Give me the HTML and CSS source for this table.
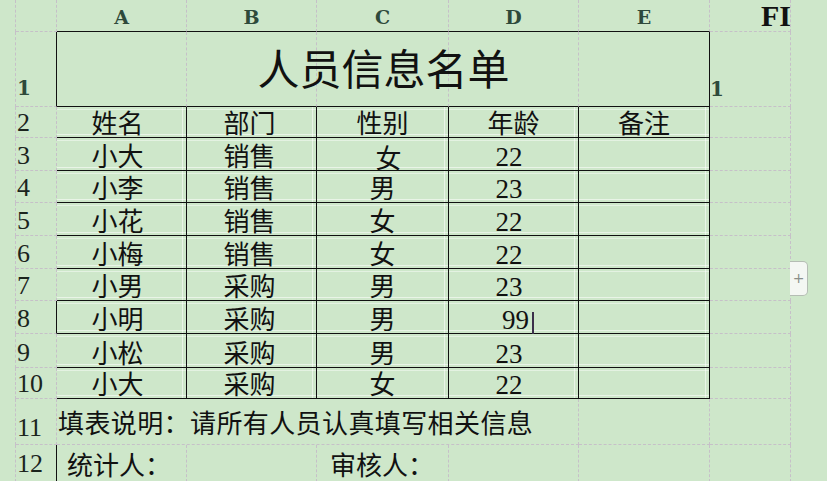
FILE: index.html
```html
<!DOCTYPE html>
<html lang="zh-CN">
<head>
<meta charset="utf-8">
<title>人员信息名单</title>
<link rel="stylesheet" href="styles.css">
</head>
<body>
<div class="wrap">
  <div class="sheet">
    <!-- column header row -->
    <div class="m"></div>
    <div class="c hd"></div>
    <div class="c hd sb">A</div>
    <div class="c hd sb">B</div>
    <div class="c hd sb">C</div>
    <div class="c hd sb">D</div>
    <div class="c hd sb">E</div>
    <div class="c hd fh"><span>FIL</span></div>
    <div class="x"></div>

    <!-- row 1 -->
    <div class="m"></div>
    <div class="c rh sr rn1">1</div>
    <div class="c sb r1 g3"></div>
    <div class="c sb r1 g4"></div>
    <div class="c sb r1 g5"></div>
    <div class="c sb r1 g6"></div>
    <div class="c sb sr r1 g7"></div>
    <div class="title">人员信息名单</div>
    <div class="c f1">1</div>
    <div class="x"></div>

    <!-- row 2 -->
    <div class="m"></div>
    <div class="c rh">2</div>
    <div class="c t ca">姓名</div>
    <div class="c t cb">部门</div>
    <div class="c t">性别</div>
    <div class="c t">年龄</div>
    <div class="c t">备注</div>
    <div class="c"></div>
    <div class="x"></div>

    <!-- row 3 -->
    <div class="m"></div>
    <div class="c rh">3</div>
    <div class="c t ca">小大</div>
    <div class="c t cb">销售</div>
    <div class="c t odd">女</div>
    <div class="c t num">22</div>
    <div class="c t"></div>
    <div class="c"></div>
    <div class="x"></div>

    <!-- row 4 -->
    <div class="m"></div>
    <div class="c rh">4</div>
    <div class="c t ca">小李</div>
    <div class="c t cb">销售</div>
    <div class="c t">男</div>
    <div class="c t num">23</div>
    <div class="c t"></div>
    <div class="c"></div>
    <div class="x"></div>

    <!-- row 5 -->
    <div class="m"></div>
    <div class="c rh">5</div>
    <div class="c t ca">小花</div>
    <div class="c t cb">销售</div>
    <div class="c t">女</div>
    <div class="c t num">22</div>
    <div class="c t"></div>
    <div class="c"></div>
    <div class="x"></div>

    <!-- row 6 -->
    <div class="m"></div>
    <div class="c rh">6</div>
    <div class="c t ca">小梅</div>
    <div class="c t cb">销售</div>
    <div class="c t">女</div>
    <div class="c t num">22</div>
    <div class="c t"></div>
    <div class="c"></div>
    <div class="x"></div>

    <!-- row 7 -->
    <div class="m"></div>
    <div class="c rh">7</div>
    <div class="c t ca">小男</div>
    <div class="c t cb">采购</div>
    <div class="c t">男</div>
    <div class="c t num">23</div>
    <div class="c t"></div>
    <div class="c"></div>
    <div class="x"></div>

    <!-- row 8 -->
    <div class="m"></div>
    <div class="c rh sr">8</div>
    <div class="c t ca">小明</div>
    <div class="c t cb">采购</div>
    <div class="c t">男</div>
    <div class="c t num edit">99<span class="caret"></span></div>
    <div class="c t"></div>
    <div class="c"></div>
    <div class="x"></div>

    <!-- row 9 -->
    <div class="m"></div>
    <div class="c rh">9</div>
    <div class="c t ca">小松</div>
    <div class="c t cb">采购</div>
    <div class="c t">男</div>
    <div class="c t num">23</div>
    <div class="c t"></div>
    <div class="c"></div>
    <div class="x"></div>

    <!-- row 10 -->
    <div class="m"></div>
    <div class="c rh">10</div>
    <div class="c t ca">小大</div>
    <div class="c t cb">采购</div>
    <div class="c t">女</div>
    <div class="c t num">22</div>
    <div class="c t"></div>
    <div class="c"></div>
    <div class="x"></div>

    <!-- row 11 -->
    <div class="m"></div>
    <div class="c rh rn11">11</div>
    <div class="c note">填表说明：请所有人员认真填写相关信息</div>
    <div class="c"></div>
    <div class="c"></div>
    <div class="x"></div>

    <!-- row 12 -->
    <div class="m"></div>
    <div class="c rh sr rn12">12</div>
    <div class="c sig sig-a">统计人：</div>
    <div class="c"></div>
    <div class="c sig sig-c">审核人：</div>
    <div class="c"></div>
    <div class="c"></div>
    <div class="c"></div>
    <div class="x"></div>
  </div>
  <div class="tab">+</div>
</div>
</body>
</html>
```

FILE: styles.css
```css
html, body {
  margin: 0;
  padding: 0;
}

body {
  width: 827px;
  height: 481px;
  overflow: hidden;
  background: #cee7ca;
  color: #111;
  font-family: "Noto Sans CJK SC", sans-serif;
}

.wrap {
  position: relative;
  width: 827px;
  height: 481px;
  overflow: hidden;
}

.sheet {
  display: grid;
  grid-template-columns: 16px 41px 130px 130px 132px 130px 131px 81px 1fr;
  grid-template-rows: 32px 75px 31px 33px 32px 33px 33px 32px 33px 34px 31px 46px 37px;
}

/* left blank margin */
.m {
  border-right: 1px dashed #c6c0c8;
}

/* blank area right of column F */
.x {
  border: none;
}

/* generic cell */
.c {
  box-sizing: border-box;
  border-right: 1px dashed #c6c0c8;
  border-bottom: 1px dashed #c6c0c8;
  display: flex;
  align-items: flex-end;
  justify-content: center;
  white-space: nowrap;
  min-width: 0;
  min-height: 0;
  font-size: 26px;
  line-height: 26px;
  padding-bottom: 2px;
}

.sb {
  border-bottom: 1px solid #111;
}

.sr {
  border-right: 1px solid #111;
}

/* column letters */
.hd {
  align-items: center;
  padding-bottom: 0;
  padding-top: 2px;
  font-family: "DejaVu Serif", serif;
  font-weight: bold;
  font-size: 19px;
  line-height: 20px;
  color: #2e4a3b;
}

.fh {
  justify-content: flex-start;
  align-items: flex-end;
  overflow: hidden;
  padding-left: 51px;
  padding-top: 0;
  padding-bottom: 0;
  color: #111;
  font-family: "Liberation Serif", serif;
  font-size: 30px;
  line-height: 30px;
}

/* row numbers */
.rh {
  justify-content: flex-start;
  padding-left: 1px;
  padding-bottom: 1px;
  font-family: "Liberation Serif", serif;
  font-size: 26px;
  line-height: 26px;
  color: #1b241d;
}

.rn1,
.f1 {
  font-family: "DejaVu Serif", serif;
  font-weight: bold;
  font-size: 20px;
  line-height: 20px;
  color: #2e4a3b;
  padding-bottom: 8px;
}

.f1 {
  justify-content: flex-start;
  padding-left: 0;
  padding-bottom: 7px;
}

.rn11 {
  padding-bottom: 3px;
}

.rn12 {
  align-items: center;
  padding-bottom: 0;
  padding-top: 2px;
}

/* title row */
.r1 { grid-row: 2; }
.g3 { grid-column: 3; }
.g4 { grid-column: 4; }
.g5 { grid-column: 5; }
.g6 { grid-column: 6; }
.g7 { grid-column: 7; }

.title {
  grid-row: 2;
  grid-column: 3 / 8;
  z-index: 1;
  display: flex;
  align-items: center;
  justify-content: center;
  padding-bottom: 5px;
  font-size: 42px;
  line-height: 42px;
  color: #111;
}

/* bordered table cells */
.t {
  border-right: 1px solid #111;
  border-bottom: 1px solid #111;
  background-image:
    linear-gradient(to top, transparent 2px, rgba(255, 255, 255, 0.55) 2px, rgba(255, 255, 255, 0.55) 3px, transparent 3px),
    linear-gradient(to bottom, transparent 2px, rgba(255, 255, 255, 0.45) 2px, rgba(255, 255, 255, 0.45) 3px, transparent 3px),
    linear-gradient(to left, transparent 3px, rgba(255, 255, 255, 0.55) 3px, rgba(255, 255, 255, 0.55) 4px, transparent 4px);
}

.ca {
  padding-right: 8px;
}

.cb {
  padding-right: 4px;
}

.odd {
  padding-left: 12px;
  padding-bottom: 0;
}

.num {
  font-family: "Liberation Serif", serif;
  font-size: 27px;
  line-height: 20px;
  padding-bottom: 3px;
  padding-right: 9px;
}

.edit {
  padding-right: 0;
  padding-left: 9px;
}

.caret {
  display: inline-block;
  width: 2px;
  height: 22px;
  margin-left: 3px;
  margin-bottom: -4px;
  background: #3b2f4a;
}

/* note row */
.note {
  grid-column: span 4;
  justify-content: flex-start;
  align-items: center;
  padding-left: 1px;
  padding-bottom: 0;
  letter-spacing: 0.4px;
}

.sig {
  justify-content: flex-start;
  align-items: center;
  padding-bottom: 0;
  padding-top: 1px;
  overflow: visible;
}

.sig-a {
  padding-left: 10px;
}

.sig-c {
  padding-left: 13px;
}

/* sheet tab button on the right edge */
.tab {
  position: absolute;
  left: 790px;
  top: 261px;
  width: 18px;
  height: 35px;
  box-sizing: border-box;
  border: 1px solid #b5bdb4;
  border-left: none;
  border-radius: 0 5px 5px 0;
  background: #f4f7f3;
  color: #8a8f8a;
  font-family: "DejaVu Sans", sans-serif;
  font-size: 14px;
  line-height: 33px;
  text-align: center;
}
```
